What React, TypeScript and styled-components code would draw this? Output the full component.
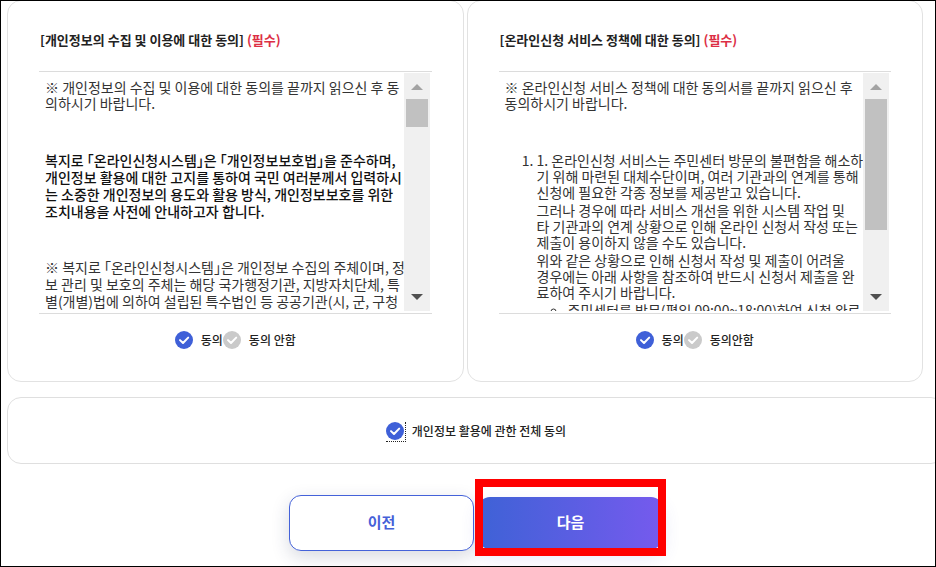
import React from "react";
import styled, { createGlobalStyle } from "styled-components";

const Global = createGlobalStyle`
  *, *::before, *::after { box-sizing: border-box; }
  body {
    margin: 0;
    background: #fff;
    color: #222;
    font-family: "Noto Sans CJK KR", "Noto Sans", sans-serif;
    font-size: 14px;
  }
`;

const Page = styled.main`
  min-height: 100vh;
  border: 1px solid #000;
  padding: 0 0 12px 6px;
  overflow: hidden;
`;

const Cards = styled.div`
  display: grid;
  grid-template-columns: 1fr 1fr;
  gap: 3px;
  margin: -1px 12px 0 0;
`;

const Card = styled.section`
  border: 1px solid #e2e2e2;
  border-radius: 14px;
  padding: 29px 31px 31px;
  min-width: 0;
`;

const Title = styled.h2`
  margin: 0 0 21px;
  padding-left: 1px;
  font-size: 13px;
  line-height: 20px;
  font-weight: 700;
  white-space: nowrap;
`;

const Required = styled.span`
  color: #dc2f45;
`;

const TermsBox = styled.div`
  display: flex;
  height: 243px;
  padding: 1px 2px 2px 0;
  border-top: 1px solid #dcdcdc;
  border-bottom: 1px solid #dcdcdc;
`;

const Terms = styled.div`
  flex: 1;
  min-width: 0;
  padding: 6px 0 0 6px;
  overflow: hidden;
  white-space: nowrap;
  color: #333;
  font-feature-settings: "halt";
`;

const Intro = styled.p`
  margin: 0 0 41px;
  line-height: 16px;
`;

const Clause = styled.p<{ $strong?: boolean }>`
  margin: 0 0 39px;
  line-height: 17px;
  color: ${(p) => (p.$strong ? "#111" : "inherit")};
  font-weight: ${(p) => (p.$strong ? 500 : 400)};
`;

const NumberedList = styled.ol`
  margin: 0;
  padding-left: 32px;
  line-height: 16px;
`;

const ListText = styled.p`
  margin: 0 0 2px;
`;

const CircleList = styled.ul`
  margin: 0;
  padding-left: 31px;
  list-style: circle;
`;

const ScrollTrack = styled.div`
  flex: none;
  display: flex;
  flex-direction: column;
  width: 26px;
  padding: 0 2px;
  background: #f0f0f0;
`;

const ScrollButton = styled.button<{ $end?: boolean }>`
  display: flex;
  align-items: center;
  justify-content: center;
  height: 26px;
  margin-top: ${(p) => (p.$end ? "auto" : "0")};
  padding: ${(p) => (p.$end ? "0 0 2px" : "2px 0 0")};
  border: 0;
  background: none;
  color: ${(p) => (p.$end ? "#505050" : "#a3a3a3")};
`;

const Thumb = styled.div<{ $size: number }>`
  height: ${(p) => p.$size}px;
  background: #c1c1c1;
`;

const Choices = styled.div`
  display: flex;
  justify-content: center;
  padding-top: 16px;
`;

const ChoiceLabel = styled.label`
  display: flex;
  align-items: center;
  gap: 8px;
  font-size: 12px;
  line-height: 20px;
  font-weight: 500;
  white-space: nowrap;
`;

const Mark = styled.span<{ $focus?: boolean }>`
  display: grid;
  position: relative;
  width: 18px;
  height: 18px;

  &::after {
    content: "";
    display: ${(p) => (p.$focus ? "block" : "none")};
    position: absolute;
    inset: 0 -2px -2px 0;
    border: 1px dotted #222;
    border-width: 0 1px 1px 0;
  }
`;

const MarkInput = styled.input`
  grid-area: 1 / 1;
  appearance: none;
  width: 18px;
  height: 18px;
  margin: 0;
  border-radius: 50%;
  background: #cacaca;
  outline: none;

  &:checked {
    background: #3f60d8;
  }
`;

const Tick = styled.svg`
  grid-area: 1 / 1;
  z-index: 1;
  width: 18px;
  height: 18px;
  pointer-events: none;
`;

const Lower = styled.div`
  margin-right: -10px;
`;

const AllAgree = styled.section`
  display: flex;
  justify-content: center;
  align-items: center;
  height: 67px;
  margin-top: 15px;
  border: 1px solid #dfdfdf;
  border-radius: 14px;
`;

const Actions = styled.div`
  display: flex;
  justify-content: center;
  align-items: center;
  gap: 4px;
  margin-top: 31px;
`;

const ActionButton = styled.button<{ $primary?: boolean }>`
  width: 185px;
  height: ${(p) => (p.$primary ? "52px" : "56px")};
  padding: 0 0 2px;
  border: ${(p) => (p.$primary ? "0" : "1px solid #4462d9")};
  border-radius: 12px;
  background: ${(p) => (p.$primary ? "linear-gradient(90deg, #3e62d6, #765aee)" : "#fff")};
  box-shadow: ${(p) =>
    p.$primary ? "0 8px 18px rgba(70, 80, 210, 0.14)" : "0 6px 18px rgba(40, 50, 90, 0.18)"};
  color: ${(p) => (p.$primary ? "#fff" : "#4560d8")};
  font-family: inherit;
  font-size: 15px;
  line-height: 20px;
  font-weight: 700;
`;

const Highlighted = styled.div`
  display: flex;
  position: relative;

  &::after {
    content: "";
    position: absolute;
    inset: -18px -3px -7px;
    border: 8px solid #f00;
    pointer-events: none;
  }
`;

function CheckMark({ type, name, checked, focus }: {
  type: "radio" | "checkbox";
  name: string;
  checked?: boolean;
  focus?: boolean;
}) {
  return (
    <Mark $focus={focus}>
      <MarkInput type={type} name={name} defaultChecked={checked} />
      <Tick viewBox="0 0 18 18" aria-hidden="true">
        <path
          d="M5 9.1 L8 12 L13.2 6.6"
          fill="none"
          stroke="#fff"
          strokeWidth="2"
          strokeLinecap="round"
          strokeLinejoin="round"
        />
      </Tick>
    </Mark>
  );
}

function Scrollbar({ size }: { size: number }) {
  return (
    <ScrollTrack>
      <ScrollButton type="button" aria-label="위로">
        <svg width="12" height="6" viewBox="0 0 12 6">
          <path d="M0 6 L6 0 L12 6Z" fill="currentColor" />
        </svg>
      </ScrollButton>
      <Thumb $size={size} />
      <ScrollButton type="button" aria-label="아래로" $end>
        <svg width="12" height="6" viewBox="0 0 12 6">
          <path d="M0 0 L6 6 L12 0Z" fill="currentColor" />
        </svg>
      </ScrollButton>
    </ScrollTrack>
  );
}

function Lines({ items }: { items: string[] }) {
  return (
    <>
      {items.map((line, i) => (
        <React.Fragment key={line}>
          {i > 0 && <br />}
          {line}
        </React.Fragment>
      ))}
    </>
  );
}

function ConsentCard({ title, name, decline, thumb, children }: {
  title: string;
  name: string;
  decline: string;
  thumb: number;
  children: React.ReactNode;
}) {
  return (
    <Card>
      <Title>
        {title} <Required>(필수)</Required>
      </Title>
      <TermsBox>
        <Terms>{children}</Terms>
        <Scrollbar size={thumb} />
      </TermsBox>
      <Choices>
        <ChoiceLabel>
          <CheckMark type="radio" name={name} checked />
          동의
        </ChoiceLabel>
        <ChoiceLabel>
          <CheckMark type="radio" name={name} />
          {decline}
        </ChoiceLabel>
      </Choices>
    </Card>
  );
}

export default function App() {
  return (
    <>
      <Global />
      <Page>
        <Cards>
          <ConsentCard
            title="[개인정보의 수집 및 이용에 대한 동의]"
            name="privacy"
            decline="동의 안함"
            thumb={28}
          >
            <Intro>
              <Lines
                items={[
                  "※ 개인정보의 수집 및 이용에 대한 동의를 끝까지 읽으신 후 동",
                  "의하시기 바랍니다.",
                ]}
              />
            </Intro>
            <Clause $strong>
              <Lines
                items={[
                  "복지로 「온라인신청시스템」은 「개인정보보호법」을 준수하며,",
                  "개인정보 활용에 대한 고지를 통하여 국민 여러분께서 입력하시",
                  "는 소중한 개인정보의 용도와 활용 방식, 개인정보보호를 위한",
                  "조치내용을 사전에 안내하고자 합니다.",
                ]}
              />
            </Clause>
            <Clause>
              <Lines
                items={[
                  "※ 복지로 「온라인신청시스템」은 개인정보 수집의 주체이며, 정",
                  "보 관리 및 보호의 주체는 해당 국가행정기관, 지방자치단체, 특",
                  "별(개별)법에 의하여 설립된 특수법인 등 공공기관(시, 군, 구청",
                ]}
              />
            </Clause>
          </ConsentCard>

          <ConsentCard
            title="[온라인신청 서비스 정책에 대한 동의]"
            name="service"
            decline="동의안함"
            thumb={131}
          >
            <Intro>
              <Lines
                items={[
                  "※ 온라인신청 서비스 정책에 대한 동의서를 끝까지 읽으신 후",
                  "동의하시기 바랍니다.",
                ]}
              />
            </Intro>
            <NumberedList>
              <li>
                <ListText>
                  <Lines
                    items={[
                      "1. 온라인신청 서비스는 주민센터 방문의 불편함을 해소하",
                      "기 위해 마련된 대체수단이며, 여러 기관과의 연계를 통해",
                      "신청에 필요한 각종 정보를 제공받고 있습니다.",
                    ]}
                  />
                </ListText>
                <ListText>
                  <Lines
                    items={[
                      "그러나 경우에 따라 서비스 개선을 위한 시스템 작업 및",
                      "타 기관과의 연계 상황으로 인해 온라인 신청서 작성 또는",
                      "제출이 용이하지 않을 수도 있습니다.",
                    ]}
                  />
                </ListText>
                <ListText>
                  <Lines
                    items={[
                      "위와 같은 상황으로 인해 신청서 작성 및 제출이 어려울",
                      "경우에는 아래 사항을 참조하여 반드시 신청서 제출을 완",
                      "료하여 주시기 바랍니다.",
                    ]}
                  />
                </ListText>
                <CircleList>
                  <li>주민센터를 방문(평일 09:00~18:00)하여 신청 완료</li>
                </CircleList>
              </li>
            </NumberedList>
          </ConsentCard>
        </Cards>

        <Lower>
          <AllAgree>
            <ChoiceLabel>
              <CheckMark type="checkbox" name="all" checked focus />
              개인정보 활용에 관한 전체 동의
            </ChoiceLabel>
          </AllAgree>
          <Actions>
            <ActionButton type="button">이전</ActionButton>
            <Highlighted>
              <ActionButton type="button" $primary>
                다음
              </ActionButton>
            </Highlighted>
          </Actions>
        </Lower>
      </Page>
    </>
  );
}
